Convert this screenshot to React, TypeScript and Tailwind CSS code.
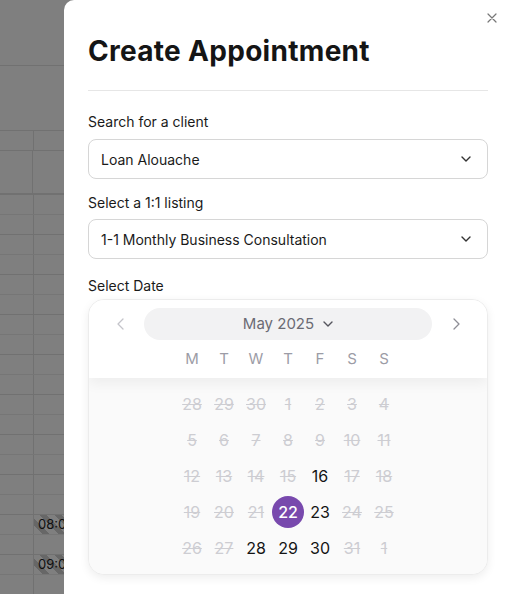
import React from "react";

const FONT = { fontFamily: "Inter, 'Noto Sans', sans-serif" };

type Day = { n: number; on?: boolean; sel?: boolean };

const weeks: Day[][] = [
  [28, 29, 30, 1, 2, 3, 4].map((n) => ({ n })),
  [5, 6, 7, 8, 9, 10, 11].map((n) => ({ n })),
  [12, 13, 14, 15, 16, 17, 18].map((n) => ({ n, on: n === 16 })),
  [19, 20, 21, 22, 23, 24, 25].map((n) => ({ n, on: n === 23, sel: n === 22 })),
  [26, 27, 28, 29, 30, 31, 1].map((n, i) => ({ n, on: i >= 2 && i <= 4 })),
];

function Chevron({ className = "" }: { className?: string }) {
  return (
    <svg className={className} width="10" height="6" viewBox="0 0 10 6" fill="none">
      <path d="M1 1l4 4 4-4" stroke="currentColor" strokeWidth="1.4" strokeLinecap="round" strokeLinejoin="round" />
    </svg>
  );
}

function Select({ value }: { value: string }) {
  return (
    <div className="flex h-10 items-center justify-between rounded-lg border border-[#d6d6d6] bg-white pl-3 pr-4 text-[14px] text-[#1a1a1a]">
      <span>{value}</span>
      <Chevron className="text-[#333]" />
    </div>
  );
}

function HourRow({ label }: { label?: string }) {
  return (
    <div className="flex h-10 flex-col">
      <div className="flex h-5 border-b border-[#ececec]">
        <div className="w-[34px] border-r border-[#e2e2e2]" />
        <div
          className={
            "flex flex-1 items-center pl-1 text-[13px] text-[#222] " +
            (label ? "bg-[repeating-linear-gradient(45deg,#ffffff_0px,#ffffff_6px,#cfcfcf_6px,#cfcfcf_11px)]" : "")
          }
        >
          {label}
        </div>
      </div>
      <div className="flex h-5 border-b border-[#e2e2e2]">
        <div className="w-[34px] border-r border-[#e2e2e2]" />
        <div className="flex-1" />
      </div>
    </div>
  );
}

export default function App() {
  return (
    <div className="relative h-[594px] w-[510px] overflow-hidden bg-white" style={FONT}>
      {/* background calendar */}
      <div className="flex flex-col">
        <div className="h-[66px] border-b border-[#e2e2e2]" />
        <div className="h-[65px] border-b border-[#e2e2e2]" />
        <div className="flex h-[20px] border-b border-[#e2e2e2]">
          <div className="w-[34px] border-r border-[#e2e2e2]" />
        </div>
        <div className="flex h-[44px] border-b-2 border-[#e2e2e2]">
          <div className="w-[33px] border-r border-[#e2e2e2]" />
        </div>
        <HourRow />
        <HourRow />
        <HourRow />
        <HourRow />
        <HourRow />
        <HourRow />
        <HourRow />
        <HourRow />
        <HourRow label="08:00" />
        <HourRow label="09:00" />
      </div>
      <div className="absolute inset-0 bg-black/50" />

      {/* modal */}
      <div className="absolute bottom-0 left-[64px] right-0 top-0 rounded-tl-[10px] bg-white pl-6 pr-[22px]">
        <button className="absolute right-[13px] top-[13px] text-[#777]">
          <svg width="10" height="10" viewBox="0 0 10 10" fill="none">
            <path d="M1 1l8 8M9 1l-8 8" stroke="currentColor" strokeWidth="1.2" strokeLinecap="round" />
          </svg>
        </button>
        <h1 className="pt-[31px] text-[28px] font-bold leading-[40px] tracking-[0.3px] text-[#151515]">
          Create Appointment
        </h1>
        <div className="mt-[19px] border-t border-[#e6e6e6]" />

        <div className="mt-[21px] text-[14px] leading-5 text-[#1a1a1a]">Search for a client</div>
        <div className="mt-[7px]">
          <Select value="Loan Alouache" />
        </div>

        <div className="mt-[14px] text-[14px] leading-5 text-[#1a1a1a]">Select a 1:1 listing</div>
        <div className="mt-[6px]">
          <Select value="1-1 Monthly Business Consultation" />
        </div>

        <div className="mt-[17px] text-[14px] leading-5 text-[#1a1a1a]">Select Date</div>

        <div className="mt-[3px] overflow-hidden rounded-2xl border border-[#ececec] bg-white shadow-[0_3px_10px_rgba(0,0,0,0.07)]">
          <div className="relative z-10 bg-white shadow-[0_6px_12px_rgba(0,0,0,0.05)]">
            <div className="flex items-center justify-center gap-[12px] pt-2">
              <button className="flex h-8 w-6 items-center justify-center text-[#c4c4ca]">
                <svg width="7" height="12" viewBox="0 0 7 12" fill="none">
                  <path d="M6 1L1 6l5 5" stroke="currentColor" strokeWidth="1.3" strokeLinecap="round" strokeLinejoin="round" />
                </svg>
              </button>
              <div className="flex h-8 w-[288px] items-center justify-center gap-[9px] rounded-full bg-[#f2f2f3] text-[15px] text-[#6b6b74]">
                <span>May 2025</span>
                <Chevron className="text-[#55555d]" />
              </div>
              <button className="flex h-8 w-6 items-center justify-center text-[#8e8e96]">
                <svg width="7" height="12" viewBox="0 0 7 12" fill="none">
                  <path d="M1 1l5 5-5 5" stroke="currentColor" strokeWidth="1.3" strokeLinecap="round" strokeLinejoin="round" />
                </svg>
              </button>
            </div>
            <div className="flex h-[38px] items-center justify-center">
              {["M", "T", "W", "T", "F", "S", "S"].map((d, i) => (
                <div key={i} className="w-8 text-center text-[15px] text-[#9c9ca6]">
                  {d}
                </div>
              ))}
            </div>
          </div>
          <div className="flex flex-col items-center bg-[#fafafa] py-2">
            {weeks.map((w, wi) => (
              <div key={wi} className="flex h-9 items-center">
                {w.map((d, di) => (
                  <div key={di} className="flex w-8 items-center justify-center">
                    {d.sel ? (
                      <div className="flex h-8 w-8 items-center justify-center rounded-full bg-[#7849ad] text-[16px] font-medium text-white">
                        {d.n}
                      </div>
                    ) : (
                      <span
                        className={
                          "text-[16px] " +
                          (d.on ? "text-[#141414]" : "text-[#cdcdd2] line-through decoration-[#cdcdd2]")
                        }
                      >
                        {d.n}
                      </span>
                    )}
                  </div>
                ))}
              </div>
            ))}
          </div>
        </div>
      </div>
    </div>
  );
}
